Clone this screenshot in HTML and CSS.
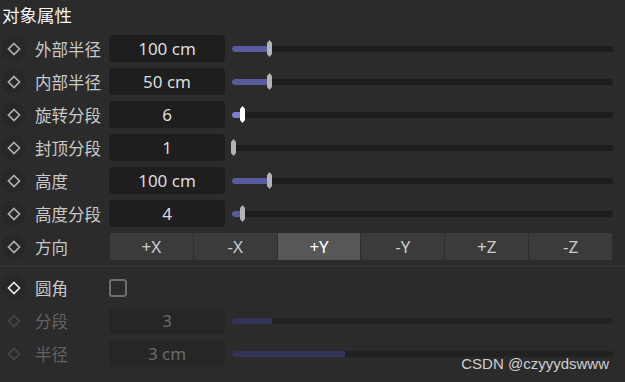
FILE: index.html
```html
<!DOCTYPE html>
<html lang="zh">
<head>
    <meta charset="UTF-8">
    <title>对象属性</title>
    <link rel="stylesheet" href="styles.css">
</head>
<body>
    <div class="panel">
        <h1 class="title">对象属性</h1>

        <div class="row">
            <span class="key"><svg viewBox="0 0 14 14"><path d="M7 1.5 L12.5 7 L7 12.5 L1.5 7 Z"/></svg></span>
            <span class="label">外部半径</span>
            <div class="field">100 cm</div>
            <div class="slider"><div class="fill" style="width: 36px"></div><div class="handle"></div></div>
        </div>
        <div class="row">
            <span class="key"><svg viewBox="0 0 14 14"><path d="M7 1.5 L12.5 7 L7 12.5 L1.5 7 Z"/></svg></span>
            <span class="label">内部半径</span>
            <div class="field">50 cm</div>
            <div class="slider"><div class="fill" style="width: 36px"></div><div class="handle"></div></div>
        </div>
        <div class="row">
            <span class="key"><svg viewBox="0 0 14 14"><path d="M7 1.5 L12.5 7 L7 12.5 L1.5 7 Z"/></svg></span>
            <span class="label">旋转分段</span>
            <div class="field">6</div>
            <div class="slider active"><div class="fill" style="width: 9px"></div><div class="handle"></div></div>
        </div>
        <div class="row">
            <span class="key"><svg viewBox="0 0 14 14"><path d="M7 1.5 L12.5 7 L7 12.5 L1.5 7 Z"/></svg></span>
            <span class="label">封顶分段</span>
            <div class="field">1</div>
            <div class="slider"><div class="fill" style="width: 0px"></div><div class="handle"></div></div>
        </div>
        <div class="row">
            <span class="key"><svg viewBox="0 0 14 14"><path d="M7 1.5 L12.5 7 L7 12.5 L1.5 7 Z"/></svg></span>
            <span class="label">高度</span>
            <div class="field">100 cm</div>
            <div class="slider"><div class="fill" style="width: 36px"></div><div class="handle"></div></div>
        </div>
        <div class="row">
            <span class="key"><svg viewBox="0 0 14 14"><path d="M7 1.5 L12.5 7 L7 12.5 L1.5 7 Z"/></svg></span>
            <span class="label">高度分段</span>
            <div class="field">4</div>
            <div class="slider"><div class="fill" style="width: 9px"></div><div class="handle"></div></div>
        </div>
        <div class="row">
            <span class="key"><svg viewBox="0 0 14 14"><path d="M7 1.5 L12.5 7 L7 12.5 L1.5 7 Z"/></svg></span>
            <span class="label">方向</span>
            <div class="axes">
                <button>+X</button>
                <button>-X</button>
                <button class="on">+Y</button>
                <button>-Y</button>
                <button>+Z</button>
                <button>-Z</button>
            </div>
        </div>

        <hr class="sep">

        <div class="row">
            <span class="key bright"><svg viewBox="0 0 14 14"><path d="M7 1.5 L12.5 7 L7 12.5 L1.5 7 Z"/></svg></span>
            <span class="label">圆角</span>
            <span class="check"></span>
        </div>
        <div class="row off">
            <span class="key"><svg viewBox="0 0 14 14"><path d="M7 1.5 L12.5 7 L7 12.5 L1.5 7 Z"/></svg></span>
            <span class="label">分段</span>
            <div class="field">3</div>
            <div class="slider"><div class="fill" style="width: 40px"></div></div>
        </div>
        <div class="row off">
            <span class="key"><svg viewBox="0 0 14 14"><path d="M7 1.5 L12.5 7 L7 12.5 L1.5 7 Z"/></svg></span>
            <span class="label">半径</span>
            <div class="field">3 cm</div>
            <div class="slider"><div class="fill" style="width: 113px"></div></div>
        </div>

        <div class="watermark">CSDN @czyyydswww</div>
    </div>
</body>
</html>
```

FILE: styles.css
```css
body {
    margin: 0;
    background: #2b2b2b;
    font-family: "Noto Sans CJK SC", "Noto Sans", sans-serif;
    color: #cfcfcf;
    overflow: hidden;
}

.panel {
    position: relative;
    height: 382px;
}

.title {
    margin: 0;
    height: 32px;
    padding-left: 2px;
    font-size: 17.5px;
    font-weight: 400;
    line-height: 30px;
    color: #f4f4f4;
}

.row {
    display: grid;
    grid-template-columns: 27px 82px 116px 1fr;
    align-items: center;
    height: 33px;
    padding-right: 12px;
}

.key {
    display: flex;
    align-items: center;
    justify-content: center;
    width: 25px;
    height: 25px;
    margin-left: 1px;
    border-radius: 50%;
    background: #272727;
}

.key svg {
    width: 14px;
    height: 14px;
    fill: none;
    stroke: #b0b0b0;
    stroke-width: 1.7;
}

.key.bright svg {
    stroke: #e8e8e8;
}

.label {
    padding-left: 8px;
    font-size: 16.5px;
    color: #c8c8c8;
}

.field {
    height: 27px;
    line-height: 27px;
    border-radius: 4px;
    background: #1e1e1e;
    text-align: center;
    font-family: "Noto Sans", sans-serif;
    font-size: 17px;
    color: #dcdcdc;
}

.slider {
    position: relative;
    height: 6px;
    margin-left: 7px;
    border-radius: 3px;
    background: #1d1d1d;
    display: flex;
    align-items: center;
}

.fill {
    height: 6px;
    border-radius: 3px 0 0 3px;
    background: #5a5a9f;
}

.handle {
    width: 5px;
    height: 17px;
    margin-left: -1px;
    background: #b3b3b3;
    clip-path: polygon(0 3px, 50% 0, 100% 3px, 100% calc(100% - 3px), 50% 100%, 0 calc(100% - 3px));
}

.slider.active .fill {
    background: #7e7ed6;
}

.slider.active .handle {
    background: #ffffff;
}

.axes {
    grid-column: 3 / 5;
    display: flex;
    gap: 1px;
    height: 27px;
    padding: 0 1px;
    border-radius: 3px;
    background: #2e2e2e;
}

.axes button {
    flex: 1;
    border: none;
    background: #3b3b3b;
    color: #cccccc;
    font-family: "Noto Sans", sans-serif;
    font-size: 17px;
    padding: 0;
}

.axes button.on {
    background: #575757;
    color: #ffffff;
}

.sep {
    margin: 3px 0 4px;
    border: none;
    height: 1px;
    background: #373737;
}

.check {
    width: 14px;
    height: 14px;
    border: 2px solid #6e6e6e;
    border-radius: 3px;
}

.row.off .key {
    background: none;
}

.row.off .key svg {
    stroke: #474747;
}

.row.off .label {
    color: #616161;
}

.row.off .field {
    background: #262626;
    color: #6a6a6a;
}

.row.off .slider {
    background: #222222;
}

.row.off .fill {
    background: #33335a;
}

.watermark {
    position: absolute;
    right: 16px;
    bottom: 10px;
    font-family: "Liberation Sans", Arial, sans-serif;
    font-size: 15px;
    color: #cfcfcf;
}
```
